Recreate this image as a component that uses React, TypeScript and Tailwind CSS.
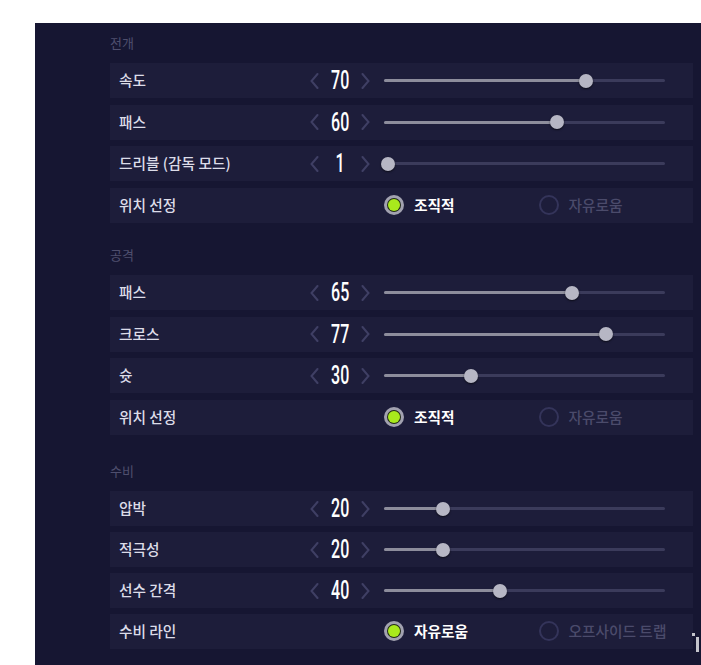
import React from 'react';

type SliderItem = { kind: 'slider'; label: string; value: number };
type RadioItem = { kind: 'radio'; label: string; options: [string, string]; selected: number };
type Item = SliderItem | RadioItem;

interface Section {
  title: string;
  className: string;
  gap: string;
  items: Item[];
}

const sections: Section[] = [
  {
    title: '전개',
    className: '',
    gap: 'gap-[6.5px]',
    items: [
      { kind: 'slider', label: '속도', value: 70 },
      { kind: 'slider', label: '패스', value: 60 },
      { kind: 'slider', label: '드리블 (감독 모드)', value: 1 },
      { kind: 'radio', label: '위치 선정', options: ['조직적', '자유로움'], selected: 0 },
    ],
  },
  {
    title: '공격',
    className: 'mt-[22.5px]',
    gap: 'gap-[6.5px]',
    items: [
      { kind: 'slider', label: '패스', value: 65 },
      { kind: 'slider', label: '크로스', value: 77 },
      { kind: 'slider', label: '슛', value: 30 },
      { kind: 'radio', label: '위치 선정', options: ['조직적', '자유로움'], selected: 0 },
    ],
  },
  {
    title: '수비',
    className: 'mt-[26.5px]',
    gap: 'gap-[6px]',
    items: [
      { kind: 'slider', label: '압박', value: 20 },
      { kind: 'slider', label: '적극성', value: 20 },
      { kind: 'slider', label: '선수 간격', value: 40 },
      { kind: 'radio', label: '수비 라인', options: ['자유로움', '오프사이드 트랩'], selected: 0 },
    ],
  },
];

const Chevron = ({ dir }: { dir: 'left' | 'right' }) => (
  <svg width="10" height="16" viewBox="0 0 10 16" className="shrink-0">
    <path
      d={dir === 'left' ? 'M8.5 1 L2.5 8 L8.5 15' : 'M1.5 1 L7.5 8 L1.5 15'}
      stroke="#3f3f64"
      strokeWidth="2"
      fill="none"
      strokeLinecap="round"
    />
  </svg>
);

const SliderRow = ({ item }: { item: SliderItem }) => {
  // thumb centre in px from the start of the track
  const pos = 4 + (item.value - 1) * 2.87;

  return (
    <div className="h-[35px] bg-[#1d1d3a] flex items-center pl-[9px] pr-[28px]">
      <span className="w-[190px] text-[14.7px] font-medium text-[#dcdce8]">{item.label}</span>
      <Chevron dir="left" />
      <div className="w-[42px] flex justify-center">
        <span className="font-['Roboto',sans-serif] text-[25px] font-medium leading-none text-white scale-x-[0.64] inline-block">
          {item.value}
        </span>
      </div>
      <Chevron dir="right" />
      <div className="ml-[13px] flex-1 relative h-[14px] flex items-center">
        <div className="w-full h-[3px] bg-[#3b3b5b] rounded-full" />
        <div className="absolute left-0 h-[3px] bg-[#8d8d9c] rounded-full" style={{ width: pos }} />
        <div
          className="absolute top-0 w-[14px] h-[14px] -ml-[7px] rounded-full bg-[#b6b6c4] shadow-[0_1px_2px_rgba(0,0,0,0.6)]"
          style={{ left: pos }}
        />
      </div>
    </div>
  );
};

const RadioRow = ({ item }: { item: RadioItem }) => (
  <div className="h-[35px] bg-[#1d1d3a] flex items-center pl-[9px]">
    <span className="w-[265px] text-[14.7px] font-medium text-[#dcdce8]">{item.label}</span>
    <div className="flex-1 grid grid-cols-2">
      {item.options.map((opt, i) =>
        i === item.selected ? (
          <div key={opt} className="flex items-center gap-[10px]">
            <div className="w-5 h-5 rounded-full bg-[#a2a2b0] flex items-center justify-center">
              <div className="w-[14px] h-[14px] rounded-full bg-[#212a14] flex items-center justify-center">
                <div className="w-[12px] h-[12px] rounded-full bg-[#a9ea1c]" />
              </div>
            </div>
            <span className="text-[14.7px] font-bold text-white">{opt}</span>
          </div>
        ) : (
          <div key={opt} className="flex items-center gap-[10px]">
            <div className="w-5 h-5 rounded-full border-2 border-[#34345a]" />
            <span className="text-[14.7px] font-medium text-[#4b4b6b]">{opt}</span>
          </div>
        )
      )}
    </div>
  </div>
);

export default function App() {
  return (
    <div className="min-h-screen bg-white pl-[35px] pt-[23px] font-['Noto_Sans_CJK_KR',sans-serif]">
      <div className="relative h-[642px] bg-[#161632] pl-[75px] pr-[8px] pt-[10px]">
        {sections.map((section) => (
          <div key={section.title} className={section.className}>
            <div className="h-5 mb-[10px] flex items-center text-[13px] text-[#4f4f6e]">
              {section.title}
            </div>
            <div className={`flex flex-col ${section.gap}`}>
              {section.items.map((item, idx) =>
                item.kind === 'slider' ? (
                  <SliderRow key={idx} item={item} />
                ) : (
                  <RadioRow key={idx} item={item} />
                )
              )}
            </div>
          </div>
        ))}

        {/* scrollbar remnant at the bottom right */}
        <div className="absolute left-[657px] top-[610px] w-[3px] h-[3px] bg-[#c4c4cc]" />
        <div className="absolute left-[661px] top-[614px] w-[3px] h-[15px] bg-[#c4c4cc]" />
      </div>
    </div>
  );
}
